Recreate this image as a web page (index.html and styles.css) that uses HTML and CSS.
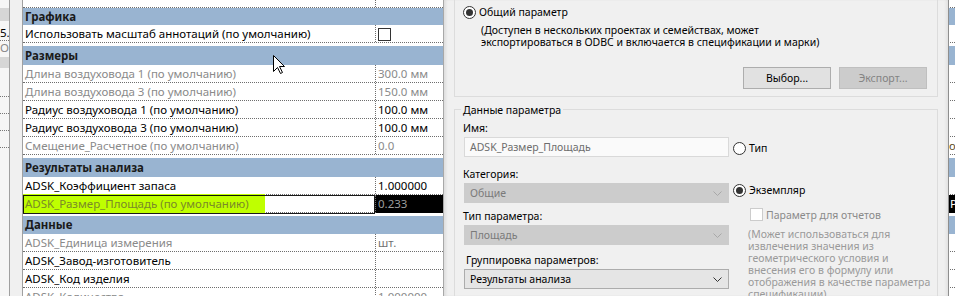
FILE: index.html
```html
<!DOCTYPE html>
<html lang="ru">
<head>
<meta charset="utf-8">
<title>Параметры</title>
<link rel="stylesheet" href="styles.css">
</head>
<body>
<div class="screen">
  <div class="farpanel">
    <div class="fp-gap"></div>
    <div class="fp-band"></div>
    <div class="fp-cell fp-dark">5.</div>
    <div class="fp-cell fp-gray">Ou</div>
    <div class="fp-band2"></div>
    <div class="fp-line l1"></div>
    <div class="fp-line"></div>
    <div class="fp-line"></div>
    <div class="fp-line"></div>
  </div>
  <div class="split"></div>
  <div class="props">
    <div class="row toprow"><div class="n"></div><div class="v"></div><div class="x"></div></div>
    <div class="hdr first">Графика</div>
    <div class="row chkrow"><div class="n">Использовать масштаб аннотаций (по умолчанию)</div><div class="v"><span class="tblchk"></span></div><div class="x"></div></div>
    <div class="hdr tall">Размеры</div>
    <div class="row ro"><div class="n">Длина воздуховода 1 (по умолчанию)</div><div class="v">300.0 мм</div><div class="x"></div></div>
    <div class="row ro"><div class="n">Длина воздуховода 3 (по умолчанию)</div><div class="v">150.0 мм</div><div class="x"></div></div>
    <div class="row"><div class="n">Радиус воздуховода 1 (по умолчанию)</div><div class="v">100.0 мм</div><div class="x"></div></div>
    <div class="row"><div class="n">Радиус воздуховода 3 (по умолчанию)</div><div class="v">100.0 мм</div><div class="x"></div></div>
    <div class="row ro"><div class="n">Смещение_Расчетное (по умолчанию)</div><div class="v">0.0</div><div class="x xo">ol</div></div>
    <div class="hdr tall">Результаты анализа</div>
    <div class="row"><div class="n">ADSK_Коэффициент запаса</div><div class="v">1.000000</div><div class="x"></div></div>
    <div class="row selrow"><div class="n"><span class="hl">ADSK_Размер_Площадь (по умолчанию)</span></div><div class="v">0.233</div><div class="x xp">P</div></div>
    <div class="hdr">Данные</div>
    <div class="row ro"><div class="n">ADSK_Единица измерения</div><div class="v unit">шт.</div><div class="x"></div></div>
    <div class="row"><div class="n">ADSK_Завод-изготовитель</div><div class="v"></div><div class="x"></div></div>
    <div class="row"><div class="n">ADSK_Код изделия</div><div class="v"></div><div class="x"></div></div>
    <div class="row ro"><div class="n">ADSK_Количество</div><div class="v">1.000000</div><div class="x"></div></div>
  </div>
</div>

<div class="dialog">
  <div class="grp grp1">
    <div class="radioline top"><span class="radio on"></span><span>Общий параметр</span></div>
    <div class="desc">(Доступен в нескольких проектах и семействах, может<br>экспортироваться в ODBC и включается в спецификации и марки)</div>
    <div class="btns"><div class="btn">Выбор...</div><div class="btn dis">Экспорт...</div></div>
  </div>
  <div class="grp grp2">
    <div class="legend">Данные параметра</div>
    <div class="g2body">
      <div class="lcol">
        <div class="lbl">Имя:</div>
        <div class="field txt">ADSK_Размер_Площадь</div>
        <div class="lbl l2">Категория:</div>
        <div class="field sel dis">Общие<svg class="chev" width="9" height="5" viewBox="0 0 9 5"><polyline points="0.5,0.5 4.5,4.5 8.5,0.5" fill="none" stroke="currentColor" stroke-width="1"/></svg></div>
        <div class="lbl l3">Тип параметра:</div>
        <div class="field sel dis">Площадь<svg class="chev" width="9" height="5" viewBox="0 0 9 5"><polyline points="0.5,0.5 4.5,4.5 8.5,0.5" fill="none" stroke="currentColor" stroke-width="1"/></svg></div>
        <div class="lbl l4">Группировка параметров:</div>
        <div class="field sel on">Результаты анализа<svg class="chev" width="9" height="5" viewBox="0 0 9 5"><polyline points="0.5,0.5 4.5,4.5 8.5,0.5" fill="none" stroke="currentColor" stroke-width="1"/></svg></div>
      </div>
      <div class="rcol">
        <div class="radioline r1"><span class="radio"></span><span>Тип</span></div>
        <div class="radioline r2"><span class="radio on"></span><span>Экземпляр</span></div>
        <div class="chkline"><span class="chk"></span><span>Параметр для отчетов</span></div>
        <div class="note">(Может использоваться для<br>извлечения значения из<br>геометрического условия и<br>внесения его в формулу или<br>отображения в качестве параметра<br>спецификации)</div>
      </div>
    </div>
  </div>
</div>

<svg class="cursor" width="13" height="20" viewBox="0 0 13 20"><path d="M0.5,0.5 L0.5,16.5 L4.5,12.5 L7.5,18.5 L9.5,17.5 L6.5,11.5 L11.5,11.5 Z" fill="#fff" stroke="#000" stroke-width="1" stroke-linejoin="miter"/></svg>
</body>
</html>
```
FILE: styles.css
```css
* { box-sizing: border-box; margin: 0; padding: 0; }
html, body { width: 955px; height: 296px; overflow: hidden; }
body { position: relative; background: #fff; font-family: "Noto Sans", "Open Sans", sans-serif; color: #000; }

.screen { display: flex; height: 296px; }

/* far left panel */
.farpanel { width: 9px; flex: none; background: #f6f6f6; display: flex; flex-direction: column; font-size: 11.5px; overflow: hidden; white-space: nowrap; }
.fp-gap { height: 8px; flex: none; }
.fp-band { height: 13px; background: #d6d6d6; flex: none; }
.fp-cell { height: 18px; line-height: 20px; flex: none; border-bottom: 1px dotted #777; }
.fp-dark { color: #000; margin-top: 2px; }
.fp-gray { color: #888; border-bottom: none; height: 14px; line-height: 14px; }
.fp-band2 { height: 11px; background: #d6d6d6; margin-top: 2px; flex: none; }
.fp-line { height: 17px; border-bottom: 1px dotted #777; flex: none; }
.fp-line.l1 { height: 29px; }

.split { width: 14px; flex: none; background: #f0f0f0; border-left: 1px solid #a0a0a0; border-right: 1px solid #a0a0a0; }

/* properties table */
.props { flex: 1; min-width: 0; background: #fff; font-size: 11.5px; display: flex; flex-direction: column; overflow: hidden; }
.row { display: grid; grid-template-columns: 352px 573px 1fr; height: 18px; border-bottom: 1px dotted #6e6e6e; flex: none; }
.row > div { line-height: 17px; padding-left: 2px; white-space: nowrap; overflow: hidden; }
.row .v { border-left: 1px dotted #6e6e6e; }
.row.ro .n, .row.ro .v { color: #8a8a8a; }
.row .v.unit { color: #6f6f6f; }
.toprow { height: 8px; }
.chkrow { height: 18px; }
.chkrow .v { display: flex; align-items: center; padding-left: 2px; }
.tblchk { width: 13px; height: 13px; border: 1px solid #333; background: #fff; display: block; margin-top: 1px; }
.hdr { height: 18px; line-height: 18px; background: #99b4d1; color: #1a1a1a; font-weight: 700; padding-left: 2px; margin-top: 3px; flex: none; white-space: nowrap; }
.hdr.first { margin-top: 0; height: 17px; line-height: 17px; }
.hdr.tall { height: 19px; line-height: 19px; }

.selrow .n { position: relative; overflow: visible; padding-left: 0; }
.selrow .n::after { content: ""; position: absolute; inset: 0 0 -1px 0; border: 1px solid rgba(0,0,0,0.9); pointer-events: none; }
.selrow .v { background: #000; color: #9c9c9c; }
.hl { display: inline-block; height: 19px; line-height: 19px; margin-top: -2px; margin-left: -3px; padding: 0 16px 0 5px; background: #bfff00; color: #7a8a28; }
.x.xo { color: #5a4a20; font-size: 11px; padding-left: 1px; }
.x.xp { background: #000; color: #fff; padding-left: 2px; }

/* dialog */
.dialog { position: absolute; left: 443px; top: 0; width: 506px; height: 296px; background: #f0f0f0; border-left: 1px solid #a8a8a8; border-right: 1px solid #8e8e8e; box-shadow: inset 3px 0 3px -1px rgba(0,0,0,0.08), inset -3px 0 3px -1px rgba(0,0,0,0.06); font-size: 10.5px; display: flex; flex-direction: column; }
.grp { margin-left: 10px; width: 484px; border: 1px solid #dcdcdc; flex: none; }
.grp1 { border-top: none; height: 97px; padding-left: 8px; display: flex; flex-direction: column; }
.radioline { display: flex; align-items: center; height: 13px; line-height: 13px; white-space: nowrap; }
.radioline.top { margin-top: 6px; }
.radio { width: 13px; height: 13px; border: 1px solid #333; border-radius: 50%; background: #fff; display: flex; align-items: center; justify-content: center; margin-right: 3px; flex: none; }
.radio.on::before { content: ""; width: 7px; height: 7px; border-radius: 50%; background: #333; }
.desc { margin-left: 18px; margin-top: 5px; line-height: 12px; white-space: nowrap; }
.btns { display: flex; justify-content: flex-end; gap: 8px; padding-right: 10px; margin-top: 19px; }
.btn { width: 88px; height: 22px; line-height: 20px; text-align: center; background: #e1e1e1; border: 1px solid #adadad; }
.btn.dis { background: #cccccc; border-color: #bfbfbf; color: #838383; }

.grp2 { margin-top: 12px; border-bottom: none; flex: 1; padding-left: 8px; }
.legend { width: max-content; margin: -7px 0 0 -2px; padding: 0 2px; background: #f0f0f0; line-height: 14px; }
.g2body { display: flex; gap: 4px; }
.lcol { width: 266px; display: flex; flex-direction: column; }
.lbl { line-height: 18px; height: 18px; margin-top: 2px; white-space: nowrap; }
.lbl.l2 { margin-top: 8px; }
.lbl.l3 { margin-top: 4px; }
.lbl.l4 { margin-top: 6px; padding-left: 3px; }
.field { margin-left: 1px; width: 265px; height: 20px; line-height: 18px; padding-left: 5px; border: 1px solid #d9d9d9; white-space: nowrap; position: relative; display: flex; align-items: center; }
.field.txt { background: #fafafa; color: #6d6d6d; }
.field.sel.dis { background: #cccccc; border-color: #cccccc; color: #7a7a7a; }
.field.sel.on { background: #e5e5e5; border-color: #acacac; color: #000; }
.chev { position: absolute; right: 6px; top: 7px; color: #a8a8a8; }
.field.sel.on .chev { color: #333; }

.rcol { display: flex; flex-direction: column; }
.radioline.r1 { margin-top: 25px; }
.radioline.r2 { margin-top: 29px; }
.chkline { display: flex; align-items: center; height: 13px; margin-top: 11px; margin-left: 17px; color: #8a8a8a; white-space: nowrap; }
.chk { width: 13px; height: 13px; border: 1px solid #cccccc; background: #fff; margin-right: 3px; flex: none; }
.note { margin-top: 7px; margin-left: 15px; line-height: 12px; color: #9a9a9a; white-space: nowrap; }

.cursor { position: absolute; left: 273px; top: 55px; }
```
